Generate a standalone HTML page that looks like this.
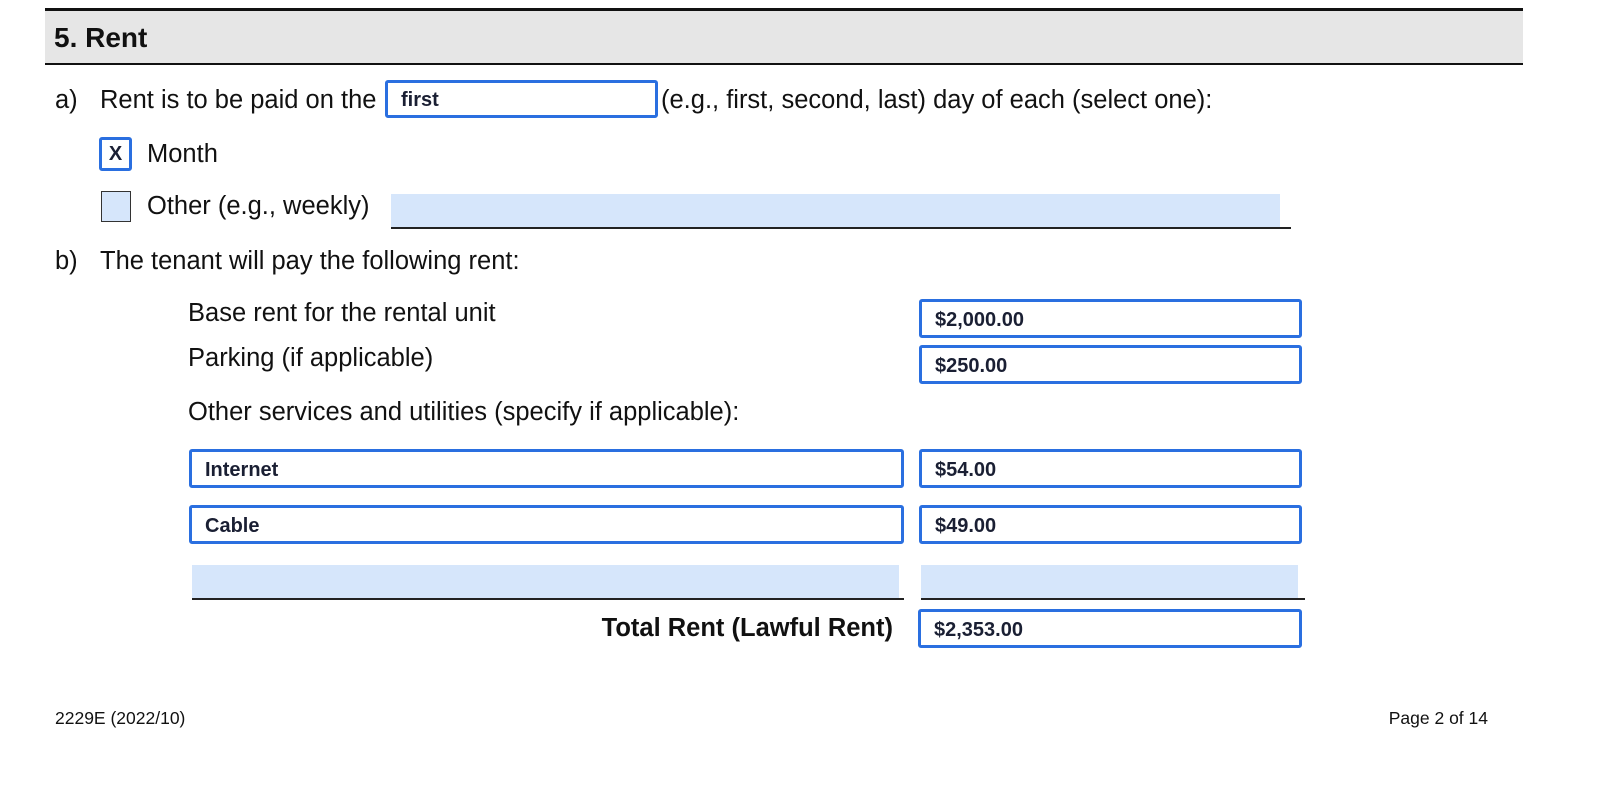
<!DOCTYPE html>
<html><head><meta charset="utf-8"><style>
body{margin:0;width:1600px;height:792px;background:#fff;position:relative;font-family:"Liberation Sans",Arial,sans-serif;color:#111;overflow:hidden}
.a{position:absolute;white-space:nowrap}
.t{font-size:25.5px;line-height:1}
.f{position:absolute;box-sizing:border-box;border:3px solid #2a6fe0;border-radius:3px;background:#fff;font-weight:bold;font-size:20px;color:#1a1f33;padding-left:13px;padding-top:3px;display:flex;align-items:center}
.lb{position:absolute;background:#d6e6fb}
.ul{position:absolute;height:1.5px;background:#222}
</style></head><body>
<div class="a" style="left:45px;top:8px;width:1478px;height:2.5px;background:#111"></div>
<div class="a" style="left:45px;top:11px;width:1478px;height:52px;background:#e6e6e6"></div>
<div class="a" style="left:45px;top:63px;width:1478px;height:1.5px;background:#111"></div>
<div class="a" style="left:54px;top:22px;font-size:28px;font-weight:bold">5. Rent</div>

<div class="a t" style="left:55px;top:88px">a)</div>
<div class="a t" style="left:100px;top:88px">Rent is to be paid on the</div>
<div class="f" style="left:385px;top:80px;width:273px;height:38px">first</div>
<div class="a t" style="left:661px;top:88px">(e.g., first, second, last) day of each (select one):</div>

<div class="f" style="left:99px;top:137px;width:33px;height:34px;padding:0;justify-content:center;font-size:20px">X</div>
<div class="a t" style="left:147px;top:142px">Month</div>

<div class="a" style="left:101px;top:191px;width:30px;height:31px;box-sizing:border-box;border:1.5px solid #333;background:#d6e6fb"></div>
<div class="a t" style="left:147px;top:194px">Other (e.g., weekly)</div>
<div class="lb" style="left:391px;top:194px;width:889px;height:33px"></div>
<div class="ul" style="left:391px;top:227px;width:900px"></div>

<div class="a t" style="left:55px;top:249px">b)</div>
<div class="a t" style="left:100px;top:249px">The tenant will pay the following rent:</div>

<div class="a t" style="left:188px;top:301px">Base rent for the rental unit</div>
<div class="f" style="left:919px;top:299px;width:383px;height:39px">$2,000.00</div>
<div class="a t" style="left:188px;top:346px">Parking (if applicable)</div>
<div class="f" style="left:919px;top:345px;width:383px;height:39px">$250.00</div>
<div class="a t" style="left:188px;top:400px">Other services and utilities (specify if applicable):</div>

<div class="f" style="left:189px;top:449px;width:715px;height:39px">Internet</div>
<div class="f" style="left:919px;top:449px;width:383px;height:39px">$54.00</div>
<div class="f" style="left:189px;top:505px;width:715px;height:39px">Cable</div>
<div class="f" style="left:919px;top:505px;width:383px;height:39px">$49.00</div>

<div class="lb" style="left:192px;top:565px;width:707px;height:33px"></div>
<div class="ul" style="left:192px;top:598px;width:712px"></div>
<div class="lb" style="left:921px;top:565px;width:377px;height:33px"></div>
<div class="ul" style="left:921px;top:598px;width:384px"></div>

<div class="a t" style="left:500px;top:616px;font-weight:bold;width:393px;text-align:right">Total Rent (Lawful Rent)</div>
<div class="f" style="left:918px;top:609px;width:384px;height:39px">$2,353.00</div>

<div class="a" style="left:55px;top:708px;font-size:17.5px">2229E (2022/10)</div>
<div class="a" style="left:1288px;top:708px;font-size:17.5px;width:200px;text-align:right">Page 2 of 14</div>
</body></html>
